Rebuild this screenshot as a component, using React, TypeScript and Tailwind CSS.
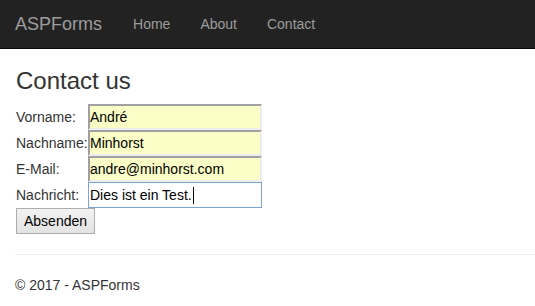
const NAV = ['Home', 'About', 'Contact']

const felder = [
    { label: 'Vorname:', wert: 'André' },
    { label: 'Nachname:', wert: 'Minhorst' },
    { label: 'E-Mail:', wert: 'andre@minhorst.com' },
]

export default function App() {
    return (
        <div className="min-h-[306px] bg-white text-[14px] text-[#333] font-['Liberation_Sans',Arial,sans-serif]">
            {/* Navbar */}
            <div className="h-[49px] bg-[#222] border-b border-[#080808] flex items-center">
                <span className="pl-[15px] pr-[16px] text-[18px] text-[#9d9d9d]">ASPForms</span>
                {NAV.map((n) => (
                    <span key={n} className="px-[15px] text-[#9d9d9d]">{n}</span>
                ))}
            </div>

            <div className="px-[16px]">
                <h2 className="mt-[19px] mb-[10px] text-[24px] leading-[26px]">Contact us</h2>

                <div className="grid grid-cols-[72px_174px]">
                    {felder.map((f) => (
                        <div key={f.label} className="contents">
                            <div className="h-[26px] flex items-center whitespace-nowrap">{f.label}</div>
                            <div className="h-[26px] bg-[#fafdc6] border-2 border-t-[#a0a0a0] border-l-[#a0a0a0] border-r-[#ececec] border-b-[#ececec] flex items-center text-black">
                                {f.wert}
                            </div>
                        </div>
                    ))}
                    <div className="h-[26px] flex items-center">Nachricht:</div>
                    <div className="h-[26px] bg-white border border-[#7da2ce] flex items-center pl-[1px] text-black">
                        Dies ist ein Test.<span className="inline-block w-px h-[17px] bg-black ml-[1px]" />
                    </div>
                </div>

                <button className="h-[26px] w-[79px] mt-0 border border-[#adadad] bg-gradient-to-b from-[#f2f2f2] to-[#e3e3e3] text-black text-[14px]">
                    Absenden
                </button>
            </div>

            <div className="pl-[15px]">
                <hr className="mt-[20px] border-t border-[#eee]" />
                <p className="mt-[20px]">© 2017 - ASPForms</p>
            </div>
        </div>
    )
}
